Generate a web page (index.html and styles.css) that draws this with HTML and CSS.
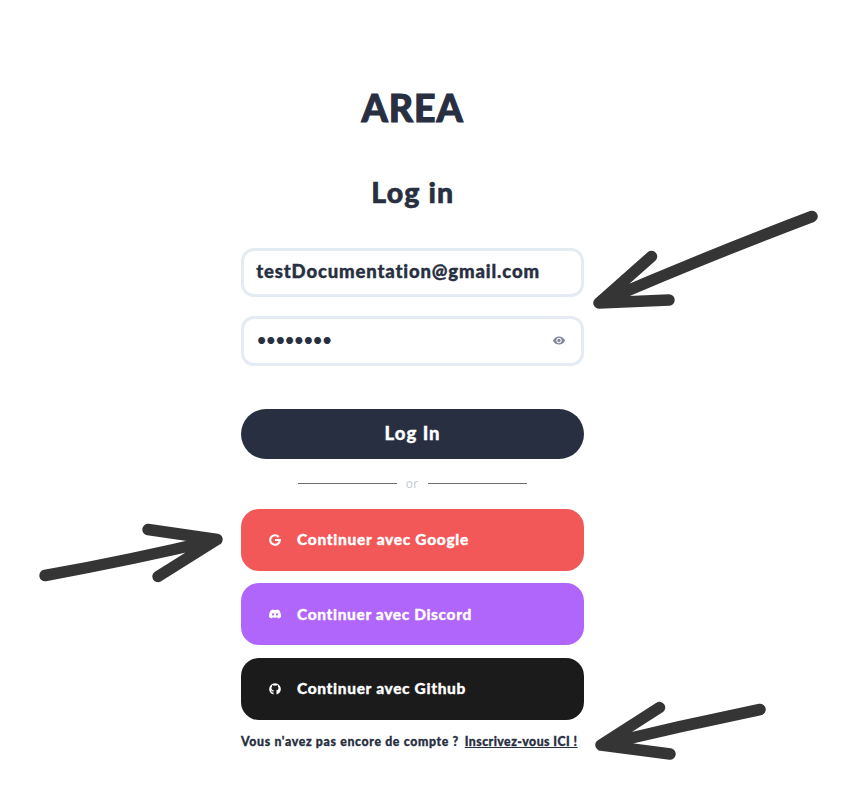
FILE: index.html
```html
<!DOCTYPE html>
<html lang="fr">
<head>
<meta charset="utf-8">
<title>AREA</title>
<link rel="stylesheet" href="styles.css">
</head>
<body>
<main class="login">
  <h1 class="brand"><span>AREA</span></h1>
  <h2 class="heading"><span>Log in</span></h2>
  <form class="form">
    <div class="field"><input class="email" type="text" value="testDocumentation@gmail.com" aria-label="Email"></div>
    <div class="field">
      <input class="password" type="password" value="password" aria-label="Password">
      <svg class="eye" viewBox="1 4.5 22 15"><path fill-rule="evenodd" d="M12 4.5C7 4.5 2.73 7.61 1 12c1.73 4.39 6 7.5 11 7.5s9.27-3.11 11-7.5c-1.73-4.39-6-7.5-11-7.5zM12 17c-2.76 0-5-2.24-5-5s2.24-5 5-5 5 2.24 5 5-2.24 5-5 5zm0-8c-1.66 0-3 1.34-3 3s1.34 3 3 3 3-1.34 3-3-1.34-3-3-3z"/></svg>
    </div>
    <button class="submit" type="button"><span>Log In</span></button>
  </form>
  <div class="divider"><i></i><span>or</span><i></i></div>
  <div class="providers">
    <button class="provider google" type="button">
      <svg viewBox="0 0 24 24"><path d="M21 4.5A11.7 11.7 0 1 0 23.7 12v-2.2H12v4.4h7A7.4 7.4 0 1 1 17.6 7.3z"/></svg>
      <span>Continuer avec Google</span>
    </button>
    <button class="provider discord" type="button">
      <svg viewBox="0 0 24 24"><path fill-rule="evenodd" d="M20.317 4.37a19.8 19.8 0 0 0-4.885-1.515c-.21.375-.444.864-.608 1.25a18.27 18.27 0 0 0-5.487 0c-.164-.386-.406-.875-.617-1.25A19.7 19.7 0 0 0 3.677 4.37C.533 9.046-.32 13.58.099 18.058A19.9 19.9 0 0 0 6.08 21.09c.462-.63.874-1.295 1.226-1.994a13 13 0 0 1-1.872-.892l.372-.292a14.2 14.2 0 0 0 12.388 0l.374.292a12.3 12.3 0 0 1-1.873.892c.36.698.772 1.362 1.225 1.993a19.8 19.8 0 0 0 6.002-3.03c.5-5.177-.838-9.674-3.605-13.69zM8.02 15.33c-1.183 0-2.157-1.085-2.157-2.419s.955-2.419 2.157-2.419 2.176 1.095 2.157 2.42c0 1.333-.956 2.418-2.157 2.418zm7.975 0c-1.183 0-2.157-1.085-2.157-2.419s.955-2.419 2.157-2.419 2.176 1.095 2.157 2.42c0 1.333-.946 2.418-2.157 2.418z"/></svg>
      <span>Continuer avec Discord</span>
    </button>
    <button class="provider github" type="button">
      <svg viewBox="0 0 24 24"><path d="M15 22.2v-4.6c0-1.2-.4-1.9-1-2.4 3-.4 5-1.600 5-5 0-1.300-.4-2.400-1.200-3.200.1-.8.1-1.900-.2-2.800-1.200 0-2.300.6-3.200 1.200a11 11 0 0 0-4.800 0C8.700 4.800 7.600 4.200 6.400 4.200c-.3.9-.3 2-.2 2.800C5.400 7.800 5 8.900 5 10.200c0 3.400 2 4.600 5 5-.5.4-.8 1-.9 1.800-2.100.7-3.100-.5-3.800-1.600-.5-.6-1.400-.8-1.700-.4 1.400.9 1.500 4.300 5.400 3.900v4.300C3.800 21.800.3 17.500.3 12.200a11.700 11.700 0 1 1 23.400 0c0 5.300-3.500 9.600-8.700 11z"/></svg>
      <span>Continuer avec Github</span>
    </button>
  </div>
  <p class="signup"><span>Vous n'avez pas encore de compte ?</span><a href="#">Inscrivez-vous ICI !</a></p>
</main>
<svg class="arrows" viewBox="0 0 851 809">
  <path d="M812 216.5Q700 259 599 303M651.5 256.500L599 303L669 300"/>
  <path d="M45 575.5Q131 560 217 539.5M148 529.5L217 539.5L158 576.5"/>
  <path d="M760 709.5Q680 726 601 745M659.5 707.5L601 745L670 754"/>
</svg>
</body>
</html>
```

FILE: styles.css
```css
* { box-sizing: border-box; }
body {
  margin: 0;
  height: 809px;
  overflow: hidden;
  background: #fff;
  color: #282f41;
  font-family: Lato, "Liberation Sans", sans-serif;
  font-weight: 900;
  font-variant-ligatures: none;
  -webkit-text-stroke: 0.3px currentColor;
}
.login { width: 343px; margin-left: 240.6px; padding-top: 83.5px; }
.brand, .heading { margin: 0; text-align: center; font-weight: 900; white-space: nowrap; }
.brand { height: 48px; padding-left: 1px; line-height: 48px; font-size: 37.5px; letter-spacing: 0.9px; -webkit-text-stroke-width: 1px; }
.heading { height: 36px; margin-top: 42px; padding-left: 1.5px; line-height: 36px; font-size: 28.5px; letter-spacing: 1.2px; -webkit-text-stroke-width: 0.6px; }
.form { margin-top: 38px; }
.field {
  display: flex;
  align-items: center;
  height: 49.5px;
  margin-bottom: 19px;
  padding: 0 16px 0 12.6px;
  border: 3px solid #e4ebf3;
  border-radius: 13px;
}
.field input {
  flex: 1;
  min-width: 0;
  padding: 0 0 2px;
  border: 0;
  outline: 0;
  background: none;
  color: inherit;
  font: inherit;
  font-size: 18.5px;
  letter-spacing: 0.85px;
  -webkit-text-stroke: 0.4px currentColor;
}
.field .password { padding: 0 0 4px 1px; font-size: 15px; letter-spacing: 0.65px; -webkit-text-stroke: 0; }
.eye { width: 12px; height: 9px; fill: #80859a; }
.submit {
  display: block;
  width: 100%;
  height: 50px;
  margin-top: 43px;
  padding: 0 0 2px 1px;
  border: 0;
  border-radius: 25px;
  background: #282f41;
  color: #fff;
  font: inherit;
  font-size: 18.5px;
  letter-spacing: 1px;
}
.divider {
  display: flex;
  align-items: center;
  justify-content: center;
  width: 229px;
  height: 50px;
  margin: 0 auto;
  color: #c5c9d6;
  font: 12px/16px "Open Sans", sans-serif;
  letter-spacing: 0.2px;
  -webkit-text-stroke: 0;
}
.divider i { flex: 1; height: 1px; background: #6b6b70; }
.divider span { width: 31px; padding-top: 1px; text-align: center; }
.providers { display: grid; gap: 12.6px; }
.provider {
  display: flex;
  align-items: center;
  height: 62px;
  padding: 0 28px;
  border: 0;
  border-radius: 18px;
  color: #fff;
  font: inherit;
  font-size: 15.5px;
  letter-spacing: 0.7px;
}
.provider span { padding-bottom: 2px; }
.provider svg { width: 12px; height: 12px; margin-right: 16.4px; fill: #fff; }
.google { background: #f25858; }
.discord { background: #b066fa; letter-spacing: 0.62px; }
.discord span { padding-bottom: 1px; }
.github { background: #1b1b1b; letter-spacing: 0.65px; }
.signup {
  display: flex;
  justify-content: space-between;
  margin: 14.5px 6px 0 0.5px;
  font-size: 12.3px;
  line-height: 16px;
  letter-spacing: 0.65px;
  white-space: nowrap;
}
.signup a { color: inherit; letter-spacing: 0.45px; text-underline-offset: 1px; text-decoration-thickness: 1px; }
.arrows {
  position: absolute;
  inset: 0;
  width: 851px;
  height: 809px;
  fill: none;
  stroke: #353535;
  stroke-width: 11.5;
  stroke-linecap: round;
  stroke-linejoin: round;
  pointer-events: none;
}
```
